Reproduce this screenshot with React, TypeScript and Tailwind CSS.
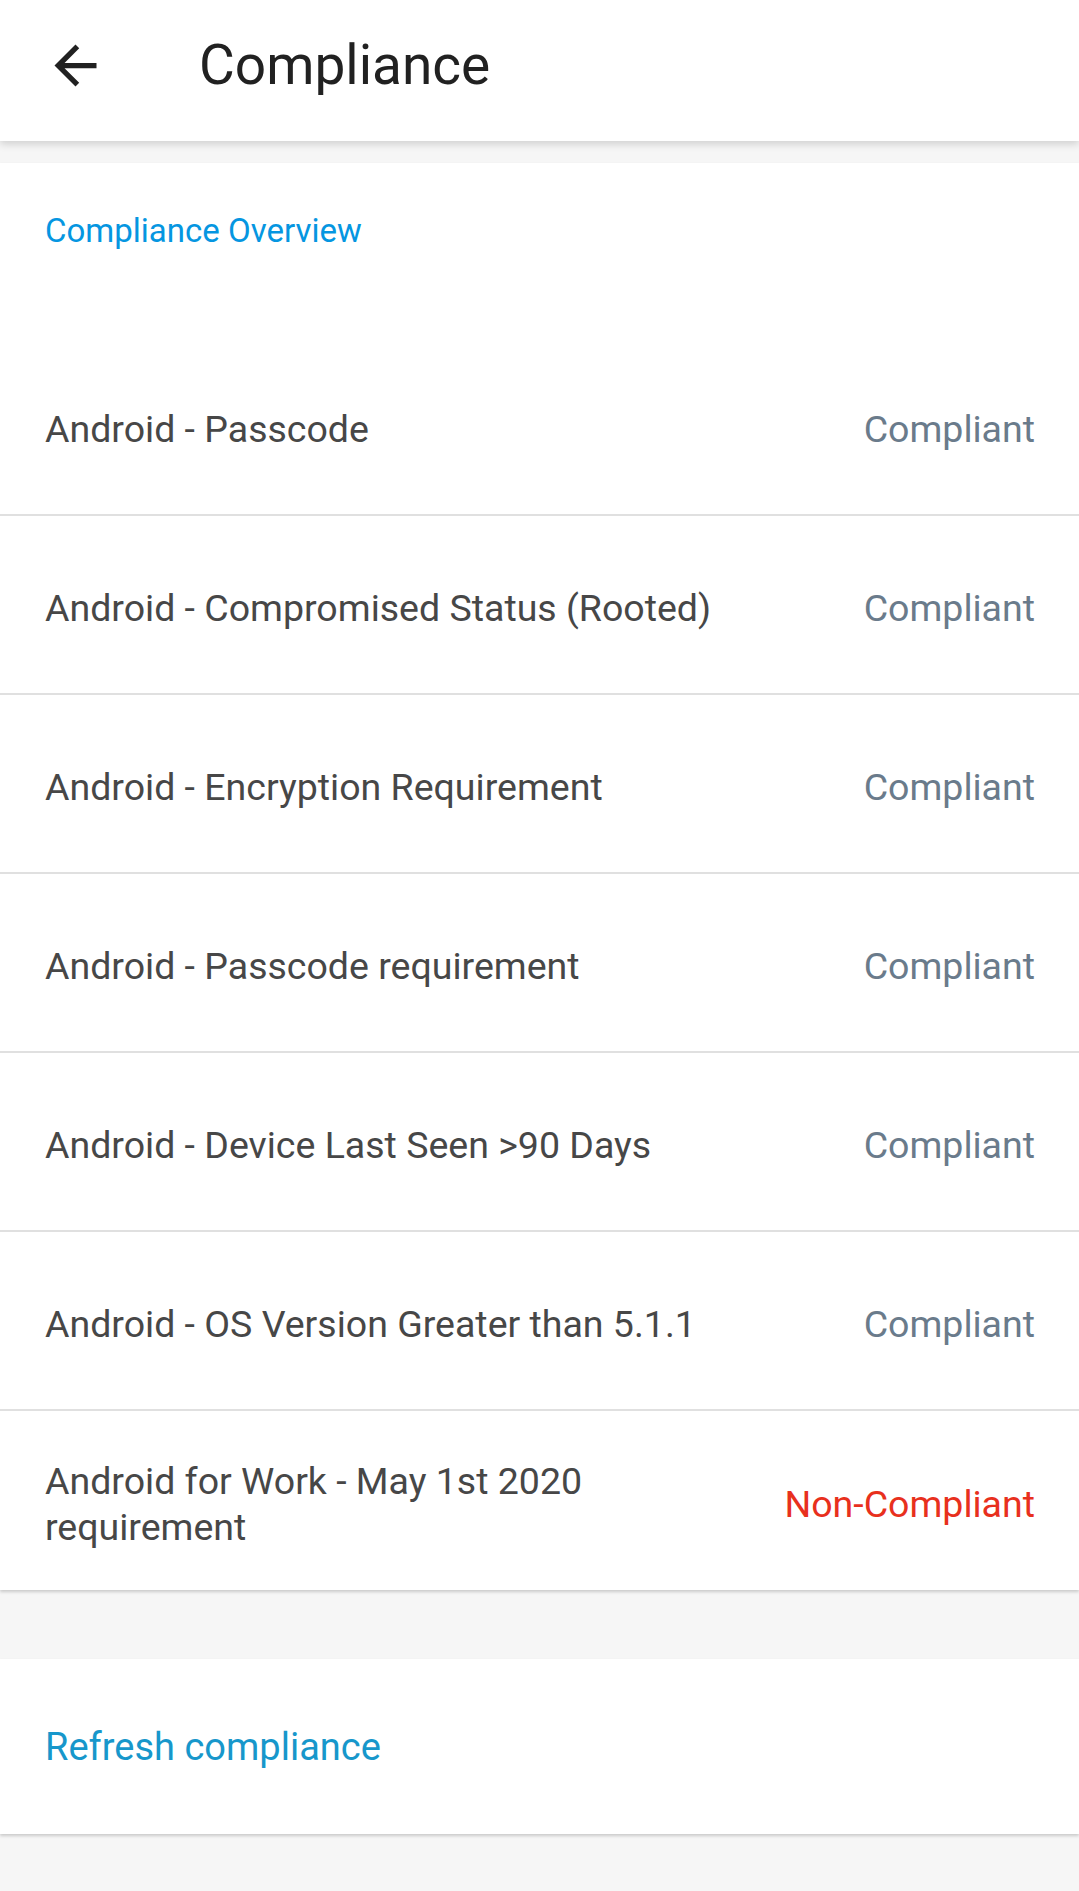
import React from 'react';

type Rule = {
  name: string;
  status: 'Compliant' | 'Non-Compliant';
};

const rules: Rule[] = [
  { name: 'Android - Passcode', status: 'Compliant' },
  { name: 'Android - Compromised Status (Rooted)', status: 'Compliant' },
  { name: 'Android - Encryption Requirement', status: 'Compliant' },
  { name: 'Android - Passcode requirement', status: 'Compliant' },
  { name: 'Android - Device Last Seen >90 Days', status: 'Compliant' },
  { name: 'Android - OS Version Greater than 5.1.1', status: 'Compliant' },
  { name: 'Android for Work - May 1st 2020 requirement', status: 'Non-Compliant' },
];

function BackArrow() {
  return (
    <svg viewBox="0 0 24 24" className="w-[63px] h-[63px]" fill="#212121">
      <path d="M20 11H7.83l5.59-5.59L12 4l-8 8 8 8 1.41-1.41L7.83 13H20v-2z" />
    </svg>
  );
}

export default function App() {
  return (
    <div
      className="w-[1079px] min-h-[1891px] bg-[#f6f6f6] flex flex-col"
      style={{ fontFamily: 'Roboto, "Noto Sans", "Liberation Sans", sans-serif' }}
    >
      <header className="relative z-10 h-[141px] pb-[10px] bg-white flex items-center shadow-[0_3px_8px_rgba(0,0,0,0.16)]">
        <button className="ml-[44px] w-[63px] h-[63px] flex items-center justify-center">
          <BackArrow />
        </button>
        <h1 className="ml-[92px] text-[55px] leading-none text-[#212121] font-normal">Compliance</h1>
      </header>

      <section className="mt-[22px] bg-white shadow-[0_2px_3px_rgba(0,0,0,0.18)]">
        <div className="h-[174px] px-[45px] pt-[46px]">
          <div className="text-[33px] leading-[44px] text-[#0596e1]">Compliance Overview</div>
        </div>
        {rules.map((rule, i) => (
          <div
            key={rule.name}
            className={
              'h-[179px] pl-[45px] pr-[44px] pt-[6px] flex items-center justify-between gap-8 ' +
              (i < rules.length - 1 ? 'border-b-2 border-[#e0e0e0]' : '')
            }
          >
            <div className="max-w-[690px] text-[37.5px] leading-[46px] text-[#474747]">{rule.name}</div>
            <div
              className={
                'text-[37.5px] leading-[46px] whitespace-nowrap ' +
                (rule.status === 'Compliant' ? 'text-[#6a7b8b]' : 'text-[#e8301d]')
              }
            >
              {rule.status}
            </div>
          </div>
        ))}
      </section>

      <section className="mt-[69px] h-[175px] bg-white shadow-[0_2px_3px_rgba(0,0,0,0.18)] flex items-center px-[45px]">
        <button className="text-[38px] leading-[46px] text-[#1797cb]">Refresh compliance</button>
      </section>
    </div>
  );
}
